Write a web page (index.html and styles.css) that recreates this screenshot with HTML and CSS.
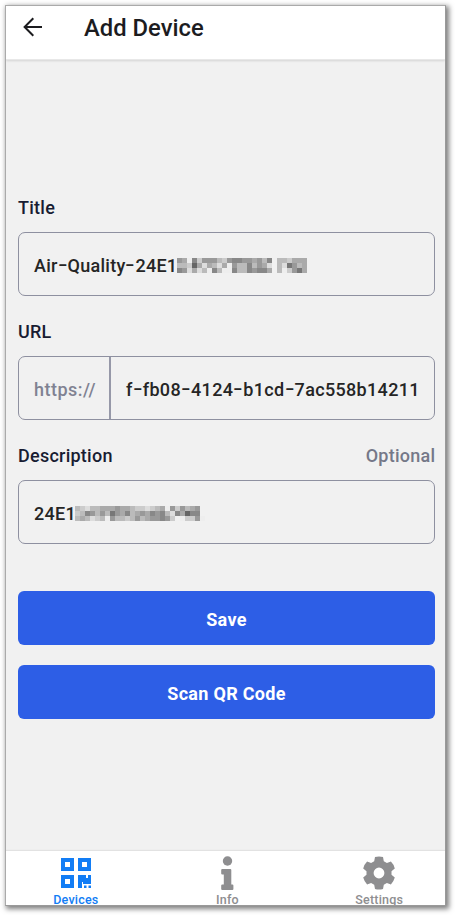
FILE: index.html
```html
<!DOCTYPE html>
<html lang="en">
<head>
<meta charset="utf-8">
<title>Add Device</title>
<link rel="stylesheet" href="styles.css">
</head>
<body>
<div class="phone">
  <header class="header">
    <svg class="back" viewBox="0 0 20 20" width="20" height="20"><path d="M19 10H1.8M10.3 1.3 1.6 10l8.7 8.7" fill="none" stroke="#1c1c1f" stroke-width="2"/></svg>
    <h1 class="heading"><span>Add Device</span></h1>
  </header>
  <main class="form">
    <div class="field">
      <div class="label-row"><span>Title</span></div>
      <div class="input"><span class="title-value">Air<span class="dash">-</span>Quality<span class="dash">-</span>24E1</span><svg class="mask" data-rows="9ae8c999bc98899a9b8fbbcaaa bbc6adabdae9bb8b9adfbd79ba 89dadbe8bee8bb8988afbec97a"></svg></div>
    </div>
    <div class="field">
      <div class="label-row"><span>URL</span></div>
      <div class="input split"><span class="prefix">https://</span><span class="url">f<span class="dash">-</span>fb08<span class="dash">-</span>4124<span class="dash">-</span>b1cd<span class="dash">-</span>7ac558b14211</span></div>
    </div>
    <div class="field">
      <div class="label-row"><span>Description</span><span class="optional">Optional</span></div>
      <div class="input"><span class="desc-value">24E1</span><svg class="mask" data-rows="bcdbbaaa9aabccdcbae9c9ba9f cb89b9b79a8ba9a898bd8a688f babdcbe9bbcb9ba9989cfecc9ef"></svg></div>
    </div>
    <div class="button save">Save</div>
    <div class="button">Scan QR Code</div>
  </main>
  <nav class="tabs">
    <div class="tab active">
      <svg viewBox="0 0 30 30" width="30" height="30"><path fill="currentColor" fill-rule="evenodd" d="M0 0h13v13H0zM4 4v5h5V4zM17 0h13v13H17zM21 4v5h5V4zM0 17h13v13H0zM4 21v5h5v-5zM17 17h8v3h2v-3h3v9h-8v-2h-1v6h-4zM23 27.5h2.5V30H23zM27.5 27.5H30V30h-2.5z"/></svg>
      <span>Devices</span>
    </div>
    <div class="tab">
      <svg viewBox="0 0 30 34" width="30" height="34"><g fill="currentColor"><circle cx="14.5" cy="5" r="4.7"/><path d="M9.2 13h8.1a1 1 0 0 1 1 1v14.5h1.1a1 1 0 0 1 1 1V33a1 1 0 0 1-1 1H9.2a1 1 0 0 1-1-1v-3.5a1 1 0 0 1 1-1h1.6v-10H9.2a1 1 0 0 1-1-1V14a1 1 0 0 1 1-1z"/></g></svg>
      <span>Info</span>
    </div>
    <div class="tab">
      <svg viewBox="0 0 32 34" width="32" height="34"><path fill="currentColor" fill-rule="evenodd" d="M12 1Q16-.1 20 1l.8 4.2 3.1 1.8 4-1.4Q30.8 8.5 31.8 12.4l-3.3 2.8v3.6l3.3 2.8q-1 3.9-3.9 6.8l-4-1.4-3.1 1.8L20 33q-4 1.1-8 0l-.8-4.2L8.1 27l-4 1.4Q1.2 25.5.2 21.6l3.3-2.8v-3.6L.2 12.4Q1.2 8.5 4.1 5.6l4 1.4 3.1-1.8zM16 11.6a5.4 5.4 0 1 0 0 10.8 5.4 5.4 0 1 0 0-10.8z"/></svg>
      <span>Settings</span>
    </div>
  </nav>
</div>
<script src="mask.js"></script>
</body>
</html>
```
FILE: styles.css
```css
* { box-sizing: border-box; }
body {
  margin: 0;
  padding: 5px;
  height: 915px;
  overflow: hidden;
  background: #fff;
  font-family: Roboto, sans-serif;
  font-weight: 500;
}
.phone {
  display: flex;
  flex-direction: column;
  width: 441px;
  height: 901px;
  overflow: hidden;
  background: #f1f1f1;
  border: 1px solid #aaa;
  border-right-color: #999;
  border-bottom-color: #999;
  box-shadow: 2px 2px 5px 1px rgba(0, 0, 0, .5);
}
.header {
  display: flex;
  flex: none;
  height: 54px;
  padding: 0 0 12px 17px;
  align-items: center;
  background: #fff;
  border-bottom: 1px solid #e8e8e8;
  box-shadow: 0 1px 2px rgba(0, 0, 0, .12);
}
.back { flex: none; margin-right: 41px; }
.heading {
  margin: 0;
  padding-top: 2px;
  font-size: 23.8px;
  font-weight: 500;
  line-height: 30px;
  color: #1c1c1f;
}
.form { flex: 1; padding: 136px 10px 0 12px; }
.field { height: 124px; }
.label-row {
  display: flex;
  justify-content: space-between;
  height: 36px;
  line-height: 24px;
  font-size: 18px;
  letter-spacing: .25px;
  color: #181c32;
}
.optional { margin-right: -.25px; color: #757888; }
.input {
  display: flex;
  align-items: center;
  height: 64px;
  padding-left: 15px;
  border: 1.5px solid #8e90a0;
  border-radius: 7px;
  font-size: 18px;
  letter-spacing: .25px;
  white-space: nowrap;
  color: #252525;
}
.title-value, .desc-value, .url { padding-top: 2px; }
.title-value { flex: none; width: 143px; }
.desc-value { flex: none; width: 41px; }
.dash {
  display: inline-block;
  padding: 0 1.8px;
  transform: translateY(-1px) scaleX(1.5);
}
.mask { width: 130px; height: 15px; margin-top: 2px; }
.prefix {
  display: flex;
  flex: none;
  align-items: center;
  width: 77px;
  height: 100%;
  padding-top: 2px;
  border-right: 2px solid #9698a8;
  letter-spacing: .5px;
  color: #808292;
}
.url { margin-left: 15px; letter-spacing: .33px; }
.button {
  height: 54px;
  margin-bottom: 20px;
  border-radius: 6px;
  background: #2d5ee6;
  color: #fff;
  font-size: 18px;
  font-weight: 700;
  letter-spacing: .3px;
  line-height: 58px;
  text-align: center;
}
.save { margin-top: 23px; }
.tabs {
  display: flex;
  flex: none;
  height: 54px;
  margin: 0 -10px 0 -6px;
  background: #fff;
  box-shadow: 0 -1px 1px #e2e2e2;
}
.tab {
  display: flex;
  flex: 1;
  flex-direction: column;
  align-items: center;
  padding-top: 5px;
  color: #8e8e90;
  font-size: 12.5px;
  letter-spacing: .2px;
}
.tab svg { flex: none; margin-bottom: 3px; }
.tab span { line-height: 14px; }
.active { padding-top: 7px; color: #127df5; }
.active svg { margin-bottom: 5px; }
```
FILE: mask.js
```js
// Each hex digit is the grey level of one 5px cell.
document.querySelectorAll('.mask').forEach((svg) => {
  svg.dataset.rows.split(' ').forEach((row, y) => {
    [...row].forEach((c, x) => {
      if (c === 'f') return;
      const r = document.createElementNS('http://www.w3.org/2000/svg', 'rect');
      r.setAttribute('x', x * 5);
      r.setAttribute('y', y * 5);
      r.setAttribute('width', 5);
      r.setAttribute('height', 5);
      r.setAttribute('fill', '#' + c + c + c);
      svg.appendChild(r);
    });
  });
});
```
